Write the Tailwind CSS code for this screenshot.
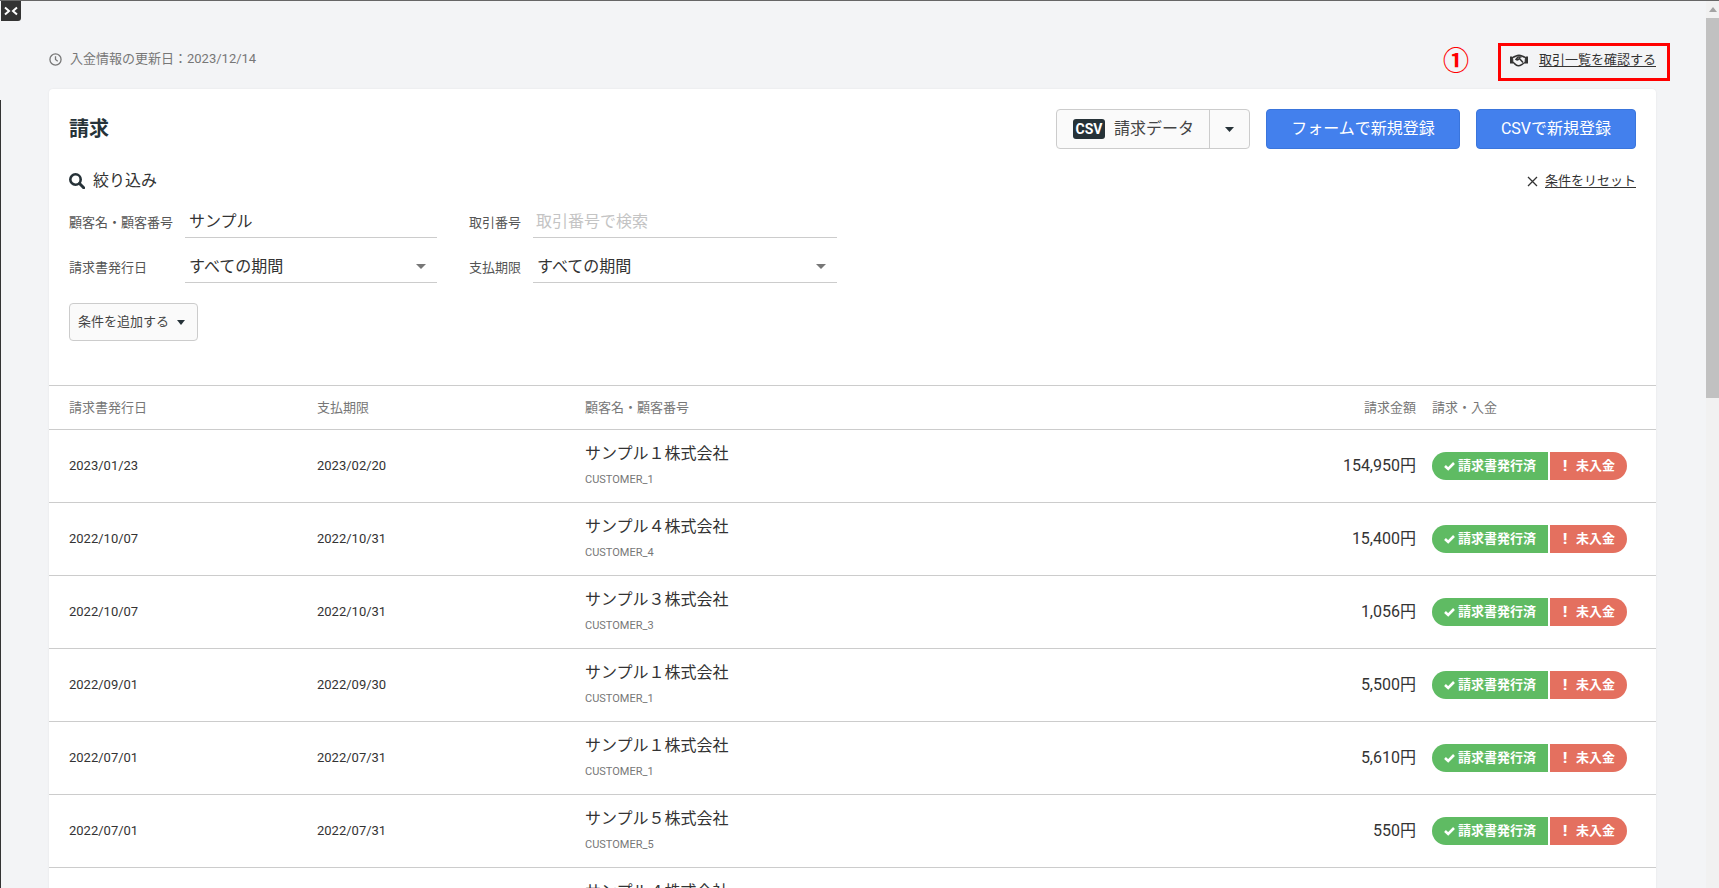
<!DOCTYPE html>
<html lang="ja">
<head>
  <meta charset="UTF-8">
  <meta name="viewport" content="width=device-width, initial-scale=1.0">
  <title>請求</title>
  <script src="https://cdn.jsdelivr.net/npm/@tailwindcss/browser@4"></script>
</head>

<body class="relative flex h-[888px] overflow-hidden bg-[#f3f4f6] text-[#333] font-['Roboto','Noto_Sans_CJK_JP',sans-serif]">

  <!-- 上端の線と開閉ボタン -->
  <div class="absolute left-0 top-0 h-px w-full bg-[#666]"></div>
  <div class="absolute left-0 top-[100px] h-[788px] w-px bg-[#333]"></div>
  <button class="absolute left-px top-px flex h-5 w-5 items-center justify-center rounded-br-[3px] bg-[#333]">
    <svg class="h-3 w-4" viewBox="0 0 16 12" fill="none" stroke="#fff" stroke-width="2">
      <path d="M2 2.5 6 6 2 9.5M14 2.5 10 6l4 3.5"/>
    </svg>
  </button>

  <main class="min-w-0 flex-1 pl-[49px] pr-[50px]">
    <!-- 更新日 -->
    <div class="flex h-[89px] items-start justify-between">
      <div class="mt-[51px] flex items-center gap-[8px] text-[13px] leading-4 text-[#777]">
        <svg class="h-[13px] w-[13px]" viewBox="0 0 14 14" fill="none" stroke="#777" stroke-width="1.4">
          <circle cx="7" cy="7" r="6"/>
          <path d="M7 3.4V7l2.4 1.8"/>
        </svg>
        <span>入金情報の更新日：2023/12/14</span>
      </div>
      <a class="mt-[52px] flex items-center gap-[11px] text-[13px] leading-4 text-[#333]">
        <svg class="h-[13px] w-[18px]" viewBox="0 0 18 13" fill="none" stroke="#333">
          <path d="M0 3h2.5l.5 6H0zM18 3h-2.5L15 9h3z" fill="#333"/>
          <path stroke-width="1.5" d="M3 3.2C5 3 6.5 1.2 9 1.2s4 1.8 6 2M3 8.6c1.6.3 2.4 2.9 5.2 3.2 2.4.2 3.9-2 6.8-3.2"/>
          <path stroke-width="1.5" d="M11.5 3 8 3 6 5.4c1.3 1 2.4.4 3.4-.9l3.6 4"/>
        </svg>
        <span class="underline underline-offset-2">取引一覧を確認する</span>
      </a>
    </div>

    <!-- 請求カード -->
    <section class="rounded-t-[4px] bg-white shadow-[0_0_2px_rgba(0,0,0,0.08)]">
      <div class="px-5 pt-5">
        <div class="flex h-10 items-center justify-between">
          <h1 class="text-[20px] font-bold leading-7 text-[#263238]">請求</h1>
          <div class="flex gap-4">
            <div class="flex h-10 w-[194px] rounded-[4px] border border-[#ccc] bg-[#fafafa]">
              <button class="flex w-[152px] items-center gap-[9px] pl-4 text-[16px] text-[#444]">
                <span class="flex h-5 w-8 items-center justify-center rounded-[3px] bg-[#263238] text-[14px] font-bold text-white">CSV</span>
                請求データ
              </button>
              <button class="flex flex-1 items-center justify-center border-l border-[#ccc]">
                <svg class="h-[5px] w-[9px]" viewBox="0 0 9 5" fill="#263238"><path d="M0 0h9L4.5 5z"/></svg>
              </button>
            </div>
            <button class="h-10 w-[194px] rounded-[4px] border border-[#3a75dc] bg-[#4380ed] text-[16px] text-white">フォームで新規登録</button>
            <button class="h-10 w-[160px] rounded-[4px] border border-[#3a75dc] bg-[#4380ed] text-[16px] text-white">CSVで新規登録</button>
          </div>
        </div>

        <!-- 絞り込み -->
        <div class="mt-[21px] flex h-[22px] items-center justify-between">
          <div class="flex items-center gap-[8px] text-[16px] text-[#333]">
            <svg class="h-4 w-4" viewBox="0 0 16 16" fill="none" stroke="#263238">
              <circle cx="6.5" cy="6.5" r="5.2" stroke-width="2.6"/>
              <path d="m10.5 10.5 4.2 4.2" stroke-width="3" stroke-linecap="round"/>
            </svg>
            絞り込み
          </div>
          <a class="flex items-center gap-[7px] text-[13px] text-[#333]">
            <svg class="h-[11px] w-[11px]" viewBox="0 0 11 11" fill="none" stroke="#333" stroke-width="1.3"><path d="m1 1 9 9M10 1l-9 9"/></svg>
            <span class="underline underline-offset-2">条件をリセット</span>
          </a>
        </div>

        <div class="mt-3 grid grid-cols-[116px_252px_32px_64px_304px] items-center gap-y-[11px]">
          <label class="pt-[3px] text-[13px] text-[#555]">顧客名・顧客番号</label>
          <div class="flex h-[34px] items-center border-b border-[#ccc] pt-[2px] pl-1 text-[16px] text-[#333]">サンプル</div>
          <div></div>
          <label class="pt-[3px] text-[13px] text-[#555]">取引番号</label>
          <div class="flex h-[34px] items-center border-b border-[#ccc] pt-[2px] pl-[3px] text-[16px] text-[#c4c4c4]">取引番号で検索</div>

          <label class="pt-[3px] text-[13px] text-[#555]">請求書発行日</label>
          <div class="flex h-[34px] items-center justify-between border-b border-[#ccc] pt-[2px] pl-1 pr-[11px] text-[16px] text-[#333]">
            すべての期間
            <svg class="h-[5px] w-[10px]" viewBox="0 0 10 5" fill="#777"><path d="M0 0h10L5 5z"/></svg>
          </div>
          <div></div>
          <label class="pt-[3px] text-[13px] text-[#555]">支払期限</label>
          <div class="flex h-[34px] items-center justify-between border-b border-[#ccc] pt-[2px] pl-1 pr-[11px] text-[16px] text-[#333]">
            すべての期間
            <svg class="h-[5px] w-[10px]" viewBox="0 0 10 5" fill="#777"><path d="M0 0h10L5 5z"/></svg>
          </div>
        </div>

        <button class="mt-5 flex h-[38px] w-[129px] items-center gap-[8px] rounded-[4px] border border-[#ccc] bg-[#fafafa] pl-[8px] text-[13px] text-[#444]">
          条件を追加する
          <svg class="h-[5px] w-[8px]" viewBox="0 0 8 5" fill="#263238"><path d="M0 0h8L4 5z"/></svg>
        </button>
      </div>

      <!-- 請求一覧 -->
      <table class="mt-11 w-full table-fixed border-t border-[#ccc]">
        <colgroup>
          <col class="w-[248px]">
          <col class="w-[268px]">
          <col>
          <col class="w-[200px]">
          <col class="w-[240px]">
        </colgroup>
        <thead>
          <tr class="h-[44px] text-left text-[13px] font-normal text-[#777]">
            <th class="pl-5 font-normal">請求書発行日</th>
            <th class="pl-5 font-normal">支払期限</th>
            <th class="pl-5 font-normal">顧客名・顧客番号</th>
            <th class="text-right font-normal">請求金額</th>
            <th class="pl-4 font-normal">請求・入金</th>
          </tr>
        </thead>
        <tbody>
          <tr class="h-[73px] border-t border-[#ccc]">
            <td class="pl-5 text-[13px] text-[#333]">2023/01/23</td>
            <td class="pl-5 text-[13px] text-[#333]">2023/02/20</td>
            <td class="pl-5 pb-[3px]"><p class="text-[16px] leading-6">サンプル１株式会社</p><p class="mt-[6px] text-[11px] leading-4 text-[#777]">CUSTOMER_1</p></td>
            <td class="text-right text-[16px]">154,950円</td>
            <td class="pl-4">
              <div class="flex gap-[2px] text-[13px] font-bold text-white">
                <span class="flex h-7 w-[116px] items-center gap-[3px] rounded-l-full bg-[#5fbb63] pl-3"><svg class="h-[10px] w-[11px]" viewBox="0 0 11 10" fill="none" stroke="#fff" stroke-width="2.6"><path d="m1 5 3.2 3L10 2"/></svg>請求書発行済</span>
                <span class="flex h-7 w-[77px] items-center rounded-r-full bg-[#e4705f] pl-[13px]"><span class="w-[13px] text-[15px] font-black">!</span>未入金</span>
              </div>
            </td>
          </tr>
          <tr class="h-[73px] border-t border-[#ccc]">
            <td class="pl-5 text-[13px] text-[#333]">2022/10/07</td>
            <td class="pl-5 text-[13px] text-[#333]">2022/10/31</td>
            <td class="pl-5 pb-[3px]"><p class="text-[16px] leading-6">サンプル４株式会社</p><p class="mt-[6px] text-[11px] leading-4 text-[#777]">CUSTOMER_4</p></td>
            <td class="text-right text-[16px]">15,400円</td>
            <td class="pl-4">
              <div class="flex gap-[2px] text-[13px] font-bold text-white">
                <span class="flex h-7 w-[116px] items-center gap-[3px] rounded-l-full bg-[#5fbb63] pl-3"><svg class="h-[10px] w-[11px]" viewBox="0 0 11 10" fill="none" stroke="#fff" stroke-width="2.6"><path d="m1 5 3.2 3L10 2"/></svg>請求書発行済</span>
                <span class="flex h-7 w-[77px] items-center rounded-r-full bg-[#e4705f] pl-[13px]"><span class="w-[13px] text-[15px] font-black">!</span>未入金</span>
              </div>
            </td>
          </tr>
          <tr class="h-[73px] border-t border-[#ccc]">
            <td class="pl-5 text-[13px] text-[#333]">2022/10/07</td>
            <td class="pl-5 text-[13px] text-[#333]">2022/10/31</td>
            <td class="pl-5 pb-[3px]"><p class="text-[16px] leading-6">サンプル３株式会社</p><p class="mt-[6px] text-[11px] leading-4 text-[#777]">CUSTOMER_3</p></td>
            <td class="text-right text-[16px]">1,056円</td>
            <td class="pl-4">
              <div class="flex gap-[2px] text-[13px] font-bold text-white">
                <span class="flex h-7 w-[116px] items-center gap-[3px] rounded-l-full bg-[#5fbb63] pl-3"><svg class="h-[10px] w-[11px]" viewBox="0 0 11 10" fill="none" stroke="#fff" stroke-width="2.6"><path d="m1 5 3.2 3L10 2"/></svg>請求書発行済</span>
                <span class="flex h-7 w-[77px] items-center rounded-r-full bg-[#e4705f] pl-[13px]"><span class="w-[13px] text-[15px] font-black">!</span>未入金</span>
              </div>
            </td>
          </tr>
          <tr class="h-[73px] border-t border-[#ccc]">
            <td class="pl-5 text-[13px] text-[#333]">2022/09/01</td>
            <td class="pl-5 text-[13px] text-[#333]">2022/09/30</td>
            <td class="pl-5 pb-[3px]"><p class="text-[16px] leading-6">サンプル１株式会社</p><p class="mt-[6px] text-[11px] leading-4 text-[#777]">CUSTOMER_1</p></td>
            <td class="text-right text-[16px]">5,500円</td>
            <td class="pl-4">
              <div class="flex gap-[2px] text-[13px] font-bold text-white">
                <span class="flex h-7 w-[116px] items-center gap-[3px] rounded-l-full bg-[#5fbb63] pl-3"><svg class="h-[10px] w-[11px]" viewBox="0 0 11 10" fill="none" stroke="#fff" stroke-width="2.6"><path d="m1 5 3.2 3L10 2"/></svg>請求書発行済</span>
                <span class="flex h-7 w-[77px] items-center rounded-r-full bg-[#e4705f] pl-[13px]"><span class="w-[13px] text-[15px] font-black">!</span>未入金</span>
              </div>
            </td>
          </tr>
          <tr class="h-[73px] border-t border-[#ccc]">
            <td class="pl-5 text-[13px] text-[#333]">2022/07/01</td>
            <td class="pl-5 text-[13px] text-[#333]">2022/07/31</td>
            <td class="pl-5 pb-[3px]"><p class="text-[16px] leading-6">サンプル１株式会社</p><p class="mt-[6px] text-[11px] leading-4 text-[#777]">CUSTOMER_1</p></td>
            <td class="text-right text-[16px]">5,610円</td>
            <td class="pl-4">
              <div class="flex gap-[2px] text-[13px] font-bold text-white">
                <span class="flex h-7 w-[116px] items-center gap-[3px] rounded-l-full bg-[#5fbb63] pl-3"><svg class="h-[10px] w-[11px]" viewBox="0 0 11 10" fill="none" stroke="#fff" stroke-width="2.6"><path d="m1 5 3.2 3L10 2"/></svg>請求書発行済</span>
                <span class="flex h-7 w-[77px] items-center rounded-r-full bg-[#e4705f] pl-[13px]"><span class="w-[13px] text-[15px] font-black">!</span>未入金</span>
              </div>
            </td>
          </tr>
          <tr class="h-[73px] border-t border-[#ccc]">
            <td class="pl-5 text-[13px] text-[#333]">2022/07/01</td>
            <td class="pl-5 text-[13px] text-[#333]">2022/07/31</td>
            <td class="pl-5 pb-[3px]"><p class="text-[16px] leading-6">サンプル５株式会社</p><p class="mt-[6px] text-[11px] leading-4 text-[#777]">CUSTOMER_5</p></td>
            <td class="text-right text-[16px]">550円</td>
            <td class="pl-4">
              <div class="flex gap-[2px] text-[13px] font-bold text-white">
                <span class="flex h-7 w-[116px] items-center gap-[3px] rounded-l-full bg-[#5fbb63] pl-3"><svg class="h-[10px] w-[11px]" viewBox="0 0 11 10" fill="none" stroke="#fff" stroke-width="2.6"><path d="m1 5 3.2 3L10 2"/></svg>請求書発行済</span>
                <span class="flex h-7 w-[77px] items-center rounded-r-full bg-[#e4705f] pl-[13px]"><span class="w-[13px] text-[15px] font-black">!</span>未入金</span>
              </div>
            </td>
          </tr>
          <tr class="h-[73px] border-t border-[#ccc]">
            <td></td>
            <td></td>
            <td class="pl-5 align-top pt-[12px]"><p class="text-[16px] leading-6">サンプル４株式会社</p></td>
            <td></td>
            <td></td>
          </tr>
        </tbody>
      </table>
    </section>
  </main>

  <!-- スクロールバー -->
  <div class="flex h-full w-[13px] flex-col bg-[#f1f1f1]">
    <div class="flex h-[18px] items-center justify-center">
      <svg class="h-[5px] w-[8px]" viewBox="0 0 8 5" fill="#a3a3a3"><path d="M4 0l4 5H0z"/></svg>
    </div>
    <div class="h-[380px] bg-[#c1c1c1]"></div>
  </div>

  <!-- 注釈（赤枠と番号） -->
  <div class="absolute left-[1498px] top-[43px] h-[38px] w-[172px] border-[3px] border-[#f00]"></div>
  <span class="absolute left-[1443px] top-[43px] text-[26px] font-bold leading-9 text-[#f00]">①</span>
</body>
</html>
